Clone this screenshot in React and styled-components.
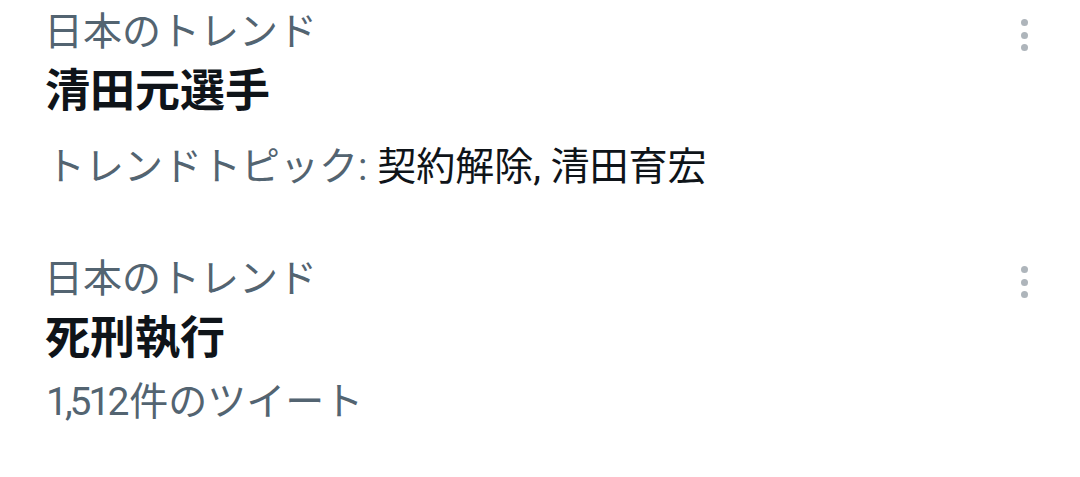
import React from 'react'
import styled, { createGlobalStyle } from 'styled-components'

const GlobalStyle = createGlobalStyle`
	html, body {
		margin: 0;
		padding: 0;
		background: #fff;
	}
	body {
		font-family: Roboto, "Noto Sans CJK JP", sans-serif;
	}
`

const List = styled.div`
	display: flex;
	flex-direction: column;
	width: 1080px;
	padding-top: 8px;
`

const Item = styled.div`
	display: flex;
	justify-content: space-between;
	align-items: flex-start;
	padding: 0 52px 0 46px;
	height: 247px;

	&:last-child {
		height: auto;
	}
`

const Body = styled.div`
	display: flex;
	flex-direction: column;
`

const Label = styled.div`
	font-size: 39px;
	line-height: 48px;
	margin-left: -2px;
	color: #536471;
`

const Title = styled.div`
	font-size: 45px;
	font-weight: 700;
	line-height: 72px;
	margin-left: -1px;
	color: #0f1419;
`

const Meta = styled.div`
	font-size: 39px;
	line-height: 48px;
	color: #536471;
	margin-top: ${(p) => p.$gap}px;
`

const Dark = styled.span`
	color: #0f1419;
`

const Num = styled.span`
	letter-spacing: -3px;
	margin-right: 3px;
`

const MoreButton = styled.button`
	display: flex;
	flex-direction: column;
	gap: 5.5px;
	background: none;
	border: none;
	padding: 0;
	margin-top: 11px;
	cursor: pointer;
`

const Dot = styled.span`
	width: 7px;
	height: 7px;
	border-radius: 50%;
	background: #aeb5bb;
`

const trends = [
	{ title: '清田元選手', topic: ['トレンドトピック: ', '契約解除, 清田育宏'], gap: 15 },
	{ title: '死刑執行', count: '1,512', gap: 3 },
]

const App = () => {
	return (
		<>
			<GlobalStyle />
			<List>
				{trends.map((t) => (
					<Item key={t.title}>
						<Body>
							<Label>日本のトレンド</Label>
							<Title>{t.title}</Title>
							<Meta $gap={t.gap}>
								{t.topic ? (
									<>
										{t.topic[0]}
										<Dark>{t.topic[1]}</Dark>
									</>
								) : (
									<>
										<Num>{t.count}</Num>件のツイート
									</>
								)}
							</Meta>
						</Body>
						<MoreButton>
							<Dot />
							<Dot />
							<Dot />
						</MoreButton>
					</Item>
				))}
			</List>
		</>
	)
}

export default App
